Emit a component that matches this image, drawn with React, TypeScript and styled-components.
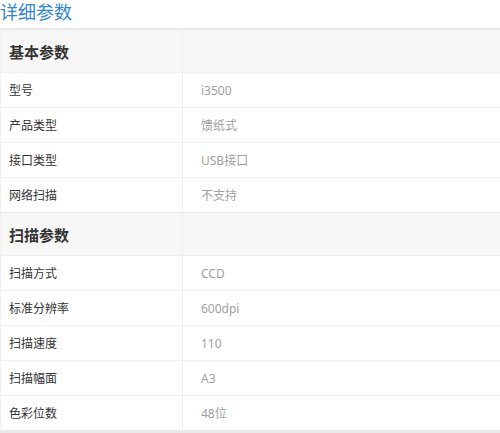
import styled, { createGlobalStyle } from 'styled-components';

const GlobalStyle = createGlobalStyle`
  body {
    margin: 0;
    background: #fff;
    font-family: 'Noto Sans', 'Noto Sans CJK SC', sans-serif;
  }
`;

interface Param {
  label: string;
  value: string;
}

interface ParamGroup {
  title: string;
  items: Param[];
}

const groups: ParamGroup[] = [
  {
    title: '基本参数',
    items: [
      { label: '型号', value: 'i3500' },
      { label: '产品类型', value: '馈纸式' },
      { label: '接口类型', value: 'USB接口' },
      { label: '网络扫描', value: '不支持' },
    ],
  },
  {
    title: '扫描参数',
    items: [
      { label: '扫描方式', value: 'CCD' },
      { label: '标准分辨率', value: '600dpi' },
      { label: '扫描速度', value: '110' },
      { label: '扫描幅面', value: 'A3' },
      { label: '色彩位数', value: '48位' },
    ],
  },
];

export default function App() {
  return (
    <>
      <GlobalStyle />
      <Page>
        <Title>详细参数</Title>
        <Table>
          {groups.map((group) => (
            <Group key={group.title}>
              <HeaderRow>
                <HeaderCell>{group.title}</HeaderCell>
                <ValueCell />
              </HeaderRow>
              {group.items.map((item) => (
                <Row key={item.label}>
                  <LabelCell>{item.label}</LabelCell>
                  <ValueCell>{item.value}</ValueCell>
                </Row>
              ))}
            </Group>
          ))}
        </Table>
      </Page>
    </>
  );
}

const Page = styled.div`
  width: 500px;
  height: 433px;
  overflow: hidden;
`;

const Title = styled.div`
  height: 28px;
  font-size: 18px;
  line-height: 24px;
  color: #3387cc;
  padding-left: 0px;
`;

const Table = styled.div`
  border-top: 2px solid #e9e9e9;
  border-bottom: 3px solid #e9e9e9;
  border-left: 1px solid #f0f0f0;
`;

const Group = styled.div`
  & + & {
    border-top: 1px solid #e4e4e4;
  }
`;

const Row = styled.div`
  display: grid;
  grid-template-columns: 182px 1fr;
  height: 35px;
  border-top: 1px solid #efefef;
  box-sizing: border-box;
`;

const HeaderRow = styled(Row)`
  height: 42px;
  border-top: none;
  background: #f7f7f7;
`;

const LabelCell = styled.div`
  display: flex;
  align-items: center;
  padding-left: 8px;
  font-size: 12px;
  color: #333;
  border-right: 1px solid #ededed;
`;

const HeaderCell = styled(LabelCell)`
  font-size: 15px;
  font-weight: bold;
  color: #333;
`;

const ValueCell = styled.div`
  display: flex;
  align-items: center;
  padding-left: 18px;
  font-size: 12px;
  color: #a0a0a0;
`;
